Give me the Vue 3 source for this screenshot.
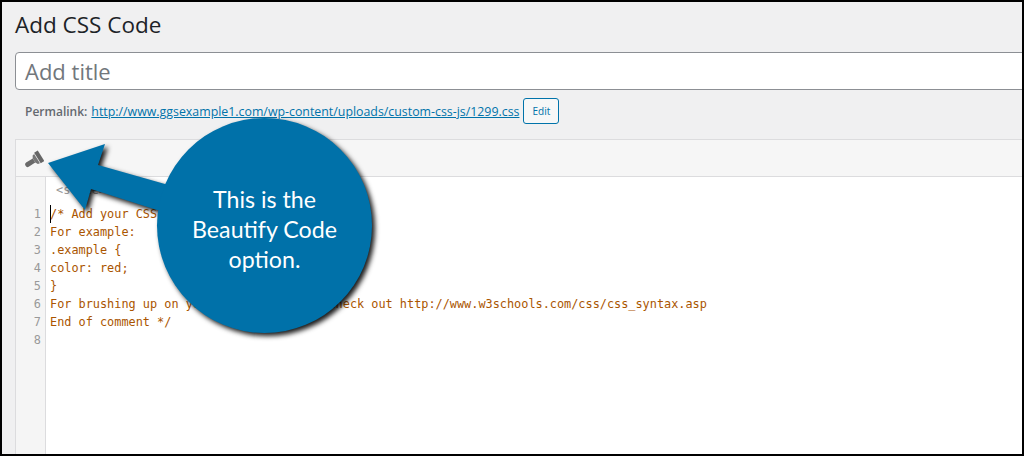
<script setup>
const lines = [
  '/* Add your CSS code here.',
  'For example:',
  '.example {',
  'color: red;',
  '}',
  'For brushing up on your CSS knowledge, check out http://www.w3schools.com/css/css_syntax.asp',
  'End of comment */',
  ''
]
</script>

<template>
  <div class="page">
    <h1 class="heading">Add CSS Code</h1>
    <div class="title-box">Add title</div>
    <div class="permalink">
      <strong>Permalink:</strong>
      <a class="link">http://www.ggsexample1.com/wp-content/uploads/custom-css-js/1299.css</a>
      <span class="edit">Edit</span>
    </div>
    <div class="editor">
      <div class="toolbar">
        <svg class="brush" width="20" height="20" viewBox="0 0 20 20">
          <g transform="translate(10 12.500) rotate(58)">
            <path d="M-6.500 -8.500 L6 -8.500 L6 -4.200 L-6.500 -4.200Z" fill="#666"/>
            <path d="M-5.500 -3.600 L5.500 -3.600 L5 -1.500 L2.300 0 L-2.300 0 L-5 -1.500Z" fill="#777"/>
            <path d="M-2.300 0 L2.300 0 L2.500 7.800 Q2.500 10 0 10 Q-2.500 10 -2.500 7.800Z" fill="#6a6a6a"/>
          </g>
        </svg>
      </div>
      <div class="body">
        <div class="gutter">
          <div v-for="(_, i) in lines" :key="i" class="num">{{ i + 1 }}</div>
        </div>
        <div class="code">
          <div class="tag">&lt;style&gt;</div>
          <div class="code-lines">
            <span class="cursor"></span>
            <div v-for="(line, i) in lines" :key="i" class="line">{{ line }}</div>
          </div>
        </div>
      </div>
    </div>

    <div class="callout">
      <svg class="arrow" width="1020" height="452" viewBox="0 0 1020 452">
        <path d="M46 161 L103 142 L96 163 L170 184 L170 209 L155 208 L89 187 L83 208 Z" fill="#0071a9"/>
        <circle cx="262.500" cy="223.500" r="107.500" fill="#0071a9"/>
      </svg>
      <div class="bubble-text">This is the<br>Beautify Code<br>option.</div>
    </div>
  </div>
</template>

<style scoped>
.page {
  position: relative;
  box-sizing: border-box;
  width: 1024px;
  height: 456px;
  overflow: hidden;
  border: 2px solid #000;
  background: #f0f0f1;
  padding-left: 13px;
  font-family: "Open Sans", sans-serif;
}
.heading {
  margin: 0;
  padding-top: 9px;
  height: 41px;
  box-sizing: border-box;
  font-size: 22.500px;
  line-height: 28px;
  font-weight: 400;
  color: #1d2327;
}
.title-box {
  box-sizing: border-box;
  height: 38px;
  margin-top: 9px;
  margin-right: -10px;
  padding: 0 0 0 9px;
  background: #fff;
  border: 1px solid #8c8f94;
  border-radius: 4px;
  font-size: 22px;
  line-height: 36px;
  color: #72777c;
}
.permalink {
  display: flex;
  align-items: center;
  height: 26px;
  margin-top: 8px;
  padding-left: 10px;
  font-size: 12px;
  color: #646970;
}
.permalink strong { font-weight: 600; margin-right: 4px; }
.link { color: #0073aa; text-decoration: underline; font-size: 12.370px; }
.edit {
  box-sizing: border-box;
  height: 26px;
  width: 36px;
  margin-left: 4px;
  border: 1px solid #0073aa;
  border-radius: 3px;
  background: #f6f7f7;
  color: #0073aa;
  font-size: 10px;
  line-height: 24px;
  text-align: center;
}
.editor {
  margin-top: 15px;
  margin-right: -10px;
  border-left: 1px solid #dcdcde;
  border-top: 1px solid #dcdcde;
  background: #fff;
  height: 330px;
}
.toolbar {
  box-sizing: border-box;
  height: 37px;
  display: flex;
  align-items: center;
  padding-left: 8px;
  background: #f6f6f6;
  border-bottom: 1px solid #dcdcde;
}
.brush { display: block; }
.body { display: flex; height: 293px; }
.gutter {
  box-sizing: border-box;
  width: 30px;
  padding-top: 28px;
  background: #f5f5f5;
  border-right: 1px solid #dcdcde;
}
.num, .line, .tag {
  font-family: "DejaVu Sans Mono", monospace;
  font-size: 11.860px;
  line-height: 18px;
  height: 18px;
}
.num { text-align: right; padding-right: 4px; color: #999; }
.code { flex: 1; min-width: 0; padding-left: 4px; }
.tag { height: 28px; padding-left: 6px; line-height: 26px; color: #999; }
.code-lines { position: relative; }
.line { color: #a50; white-space: pre; }
.cursor {
  position: absolute;
  left: 0;
  top: 0;
  width: 1px;
  height: 18px;
  background: #000;
}
.callout {
  position: absolute;
  left: 0;
  top: 0;
  width: 1020px;
  height: 452px;
}
.arrow {
  display: block;
  filter: drop-shadow(3px 3px 2.500px rgba(0, 0, 0, 0.9));
}
.bubble-text {
  position: absolute;
  left: 155px;
  top: 182px;
  width: 215px;
  text-align: center;
  font-family: Lato, sans-serif;
  font-size: 23.200px;
  line-height: 30px;
  color: #fff;
}
</style>
